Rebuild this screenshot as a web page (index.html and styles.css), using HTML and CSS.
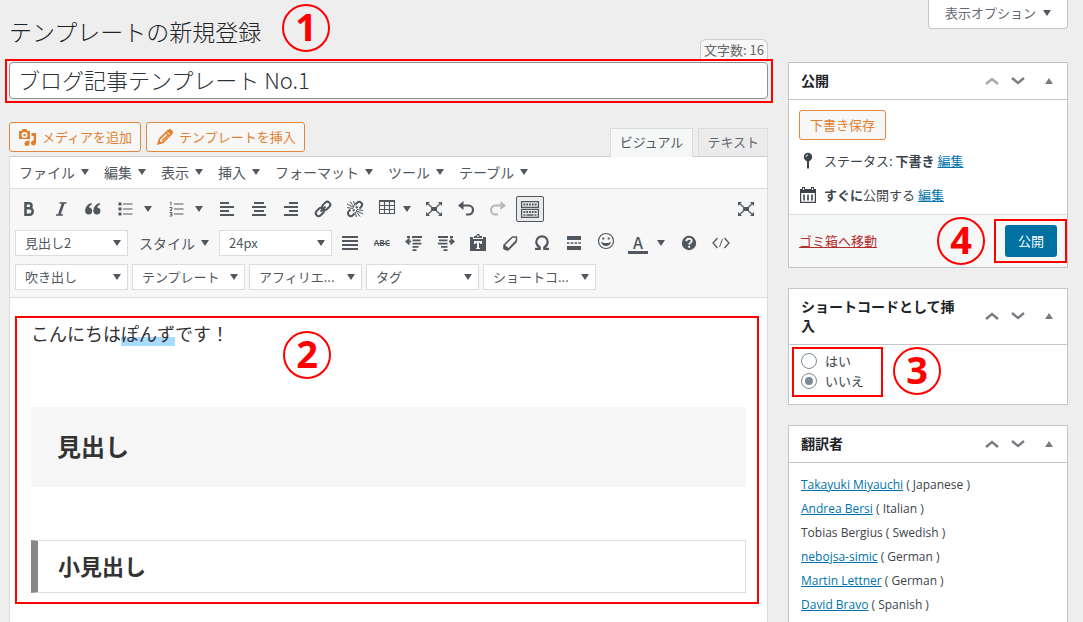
FILE: index.html
```html
<!DOCTYPE html>
<html lang="ja">
<head>
<meta charset="utf-8">
<title>テンプレートの新規登録</title>
<link rel="stylesheet" href="styles.css">
</head>
<body>
<div class="page">
  <main class="main">
    <header class="heading">
      <h1 class="heading-title">テンプレートの新規登録</h1>
      <span class="step step-1">1</span>
      <span class="counter">文字数: 16</span>
    </header>
    <div class="title-field">
      <input class="title-input" type="text" aria-label="タイトル" value="ブログ記事テンプレート No.1">
      <span class="frame frame-title"></span>
    </div>
    <div class="editor-tools">
      <div class="media-buttons">
        <button class="btn" type="button"><svg class="icon" viewBox="0 0 20 20"><path fill="currentColor" fill-rule="evenodd" d="M1 4h2.500l1-2h4l1 2H12v8H1zM6.500 5a3 3 0 1 0 0 6 3 3 0 0 0 0-6zM6.500 6.800a1.200 1.200 0 1 1 0 2.400 1.200 1.200 0 0 1 0-2.400zM13.500 6H18v10a2.500 2.500 0 1 1-2.300-2.500V9h-2.200zM11.500 13v3.500a2.500 2.500 0 1 1-2.500-2.500z"/></svg>メディアを追加</button>
        <button class="btn" type="button"><svg class="icon" viewBox="0 0 20 20"><path fill="none" stroke="currentColor" stroke-width="1.500" d="M3 17l1.500-5L13 3.500l3.500 3.500L8 15.500zM11 5.500L14.500 9M7 14l6.500-6.500M5 12l7-7"/><path fill="currentColor" d="M12 4l3-2.500L18.500 5 16 8zM3 17l1-4 3 3z"/></svg>テンプレートを挿入</button>
      </div>
      <div class="tabs">
        <button class="tab tab-active" type="button">ビジュアル</button>
        <button class="tab" type="button">テキスト</button>
      </div>
    </div>
    <section class="editor">
      <nav class="menubar">
        <button class="menu" type="button">ファイル<i class="caret"></i></button>
        <button class="menu" type="button">編集<i class="caret"></i></button>
        <button class="menu" type="button">表示<i class="caret"></i></button>
        <button class="menu" type="button">挿入<i class="caret"></i></button>
        <button class="menu" type="button">フォーマット<i class="caret"></i></button>
        <button class="menu" type="button">ツール<i class="caret"></i></button>
        <button class="menu" type="button">テーブル<i class="caret"></i></button>
      </nav>
      <div class="toolbar">
        <div class="tool-row">
          <button class="tool" type="button" aria-label="太字"><svg class="icon" viewBox="0 0 20 20"><path fill="none" stroke="currentColor" stroke-width="2.600" d="M6.500 4.300H10a2.500 2.500 0 0 1 0 5H6.500h4a3.100 3.100 0 0 1 0 6.400h-4zV16"/></svg></button>
          <button class="tool" type="button" aria-label="斜体"><svg class="icon" viewBox="0 0 20 20"><path fill="none" stroke="currentColor" stroke-width="1.600" d="M8.500 4h7M5 16h7"/><path stroke="currentColor" stroke-width="2.600" d="M12.300 4L8.200 16"/></svg></button>
          <button class="tool" type="button" aria-label="引用"><svg class="icon" viewBox="0 0 20 20"><path fill="currentColor" d="M8.500 4C4.500 5 2.200 8 2.200 12a3.500 3.500 0 1 0 3.900-3.500C6.300 7 7.300 6 9 5.200zM16.700 4c-4 1-6.300 4-6.300 8a3.500 3.500 0 1 0 3.900-3.500c.2-1.500 1.200-2.500 2.900-3.300z"/></svg></button>
          <button class="tool split" type="button" aria-label="番号なしリスト"><svg class="icon" viewBox="0 0 20 20"><path stroke="currentColor" stroke-width="1.200" d="M8 5h9.500M8 10h9.500M8 15h9.500"/><path fill="currentColor" d="M3.500 3.500h3v3h-3zM3.500 8.500h3v3h-3zM3.500 13.500h3v3h-3z"/></svg><i class="caret"></i></button>
          <button class="tool split" type="button" aria-label="番号付きリスト"><svg class="icon" viewBox="0 0 20 20"><path stroke="currentColor" stroke-width="1.200" d="M8 5h9.500M8 10h9.500M8 15h9.500"/><path fill="none" stroke="currentColor" stroke-width=".9" d="M4 3.500l1-.5v3.500M3.500 8.500H6V10L3.800 11.500H6M3.500 13.500H6v3.500H3.500M4 15.200h2"/></svg><i class="caret"></i></button>
          <button class="tool" type="button" aria-label="左揃え"><svg class="icon" viewBox="0 0 20 20"><path stroke="currentColor" stroke-width="1.800" d="M3 4h9M3 8h14M3 12h9M3 16h14"/></svg></button>
          <button class="tool" type="button" aria-label="中央揃え"><svg class="icon" viewBox="0 0 20 20"><path stroke="currentColor" stroke-width="1.800" d="M5 4h10M3 8h14M5 12h10M3 16h14"/></svg></button>
          <button class="tool" type="button" aria-label="右揃え"><svg class="icon" viewBox="0 0 20 20"><path stroke="currentColor" stroke-width="1.800" d="M8 4h9M3 8h14M8 12h9M3 16h14"/></svg></button>
          <button class="tool" type="button" aria-label="リンク"><svg class="icon" viewBox="0 0 20 20"><g fill="none" stroke="currentColor" stroke-width="2"><rect x="-4.500" y="-2.900" width="9" height="5.800" rx="2.900" transform="translate(6.800 13) rotate(-45)"/><rect x="-4.500" y="-2.900" width="9" height="5.800" rx="2.900" transform="translate(13.200 6.800) rotate(-45)"/><path d="M7.500 12.500l5-5"/></g></svg></button>
          <button class="tool" type="button" aria-label="リンク解除"><svg class="icon" viewBox="0 0 20 20"><path fill="none" stroke="currentColor" stroke-width="2" d="M10.500 5.500l1.700-1.700a2.700 2.700 0 0 1 4 4L14.500 9.500M9.500 14.500l-1.700 1.700a2.700 2.700 0 0 1-4-4L5.500 10.500M8 12l1.500-1.500M11 9l1.500-1.500"/><path stroke="currentColor" stroke-width="1" d="M2 5l7 3.500M5 2.500L9 8M8.500 2L10 7M2 8.500l6 1M18 15l-7-3.500M15 17.500L11 12M11.500 18L10 13M18 11.500l-6-1"/></svg></button>
          <button class="tool split split-tight" type="button" aria-label="表"><svg class="icon" viewBox="0 0 20 20"><path fill="none" stroke="currentColor" stroke-width="1.100" d="M2.500 1.500h15v13h-15zM2.500 6.500h15M2.500 10.500h15M7.500 1.500v13M12.500 1.500v13"/><path stroke="currentColor" stroke-width="2" d="M2 2h16"/></svg><i class="caret"></i></button>
          <button class="tool" type="button" aria-label="全画面"><svg class="icon" viewBox="0 0 20 20"><path fill="currentColor" d="M7 8h6v4H7zM2 3h4L2 7zM18 3v4l-4-4zM2 17v-4l4 4zM18 17h-4l4-4z"/><path stroke="currentColor" stroke-width="1.300" d="M3 4l4.500 4M17 4l-4.500 4M3 16l4.500-4M17 16l-4.500-4"/></svg></button>
          <button class="tool" type="button" aria-label="取り消し"><svg class="icon" viewBox="0 0 20 20"><path fill="currentColor" d="M2 6.500L7.500 2v9z"/><path fill="none" stroke="currentColor" stroke-width="2.200" d="M6 6.500h6.500a4.500 4.500 0 0 1 0 9H10"/></svg></button>
          <button class="tool tool-disabled" type="button" aria-label="やり直し"><svg class="icon" viewBox="0 0 20 20"><path fill="currentColor" d="M18 6.500L12.500 2v9z"/><path fill="none" stroke="currentColor" stroke-width="2" d="M14 6.500H7.500a4.500 4.500 0 0 0 0 9H10"/></svg></button>
          <button class="tool tool-pressed" type="button" aria-label="ツールバー切り替え"><svg class="icon" viewBox="0 0 20 20"><path fill="none" stroke="currentColor" stroke-width="1.300" d="M1.600 2.600h16.800v5.800H1.600zM1.600 10.400h16.800v8H1.600z"/><path stroke="currentColor" stroke-width="2" stroke-dasharray="1.800 1" d="M3.500 5.500h13.500M3.500 13h13.500"/><path stroke="currentColor" stroke-width="1.600" d="M3.500 16h2M6.500 16h7M14.500 16h2"/></svg></button>
          <button class="tool tool-end" type="button" aria-label="集中執筆モード"><svg class="icon" viewBox="0 0 20 20"><path fill="currentColor" d="M7 8h6v4H7zM2 3h4L2 7zM18 3v4l-4-4zM2 17v-4l4 4zM18 17h-4l4-4z"/><path stroke="currentColor" stroke-width="1.300" d="M3 4l4.500 4M17 4l-4.500 4M3 16l4.500-4M17 16l-4.500-4"/></svg></button>
        </div>
        <div class="tool-row">
          <span class="listbox"><select aria-label="段落"><option>見出し2</option></select><i class="caret"></i></span>
          <button class="menu menu-style" type="button">スタイル<i class="caret"></i></button>
          <span class="listbox"><select aria-label="フォントサイズ"><option>24px</option></select><i class="caret"></i></span>
          <button class="tool" type="button" aria-label="両端揃え"><svg class="icon" viewBox="0 0 20 20"><path stroke="currentColor" stroke-width="1.800" d="M2 4h16M2 8h16M2 12h16M2 16h16"/></svg></button>
          <button class="tool tool-abc" type="button" aria-label="打ち消し">ABC</button>
          <button class="tool" type="button" aria-label="インデントを減らす"><svg class="icon" viewBox="0 0 20 20"><path fill="none" stroke="currentColor" stroke-width="1.800" d="M3 4h3M8 4h10M8.500 7.300h8M8.500 10.600h9M8.500 13.900h6M8.500 17.200h4M3.500 8.500H7"/><path fill="currentColor" d="M1 8.500l4.500-4v8z"/></svg></button>
          <button class="tool" type="button" aria-label="インデントを増やす"><svg class="icon" viewBox="0 0 20 20"><path fill="none" stroke="currentColor" stroke-width="1.800" d="M2 4h10M14 4h3M3 7.300h8.500M2 10.600h9.500M5 13.900h6.500M7.500 17.200h4M13 8.500h3"/><path fill="currentColor" d="M19 8.500l-4.500-4v8z"/></svg></button>
          <button class="tool" type="button" aria-label="テキストとして貼り付け"><svg class="icon" viewBox="0 0 20 20"><path fill="currentColor" fill-rule="evenodd" d="M2 4h3v2h10V4h3v14H2zM6 8v3h1.500l.5-1.300h1v5l-1 .3v1h4v-1l-1-.3v-5h1l.5 1.300H14V8z"/><path fill="currentColor" fill-rule="evenodd" d="M6 5V3h2l1-2h2l1 2h2v2zM9.200 2.500h1.600V4H9.200z"/></svg></button>
          <button class="tool" type="button" aria-label="書式設定をクリア"><svg class="icon" viewBox="0 0 20 20"><path fill="none" stroke="currentColor" stroke-width="1.500" stroke-linejoin="round" d="M4 12l8.500-8h4v3.500L8.500 16zM4 12v3.500l3.500 1.500"/><path fill="currentColor" d="M4 12l4.500 4L7.500 17.800 3.500 16zM8.500 16L17 7.500V9L8 18z"/></svg></button>
          <button class="tool" type="button" aria-label="特殊文字"><svg class="icon" viewBox="0 0 20 20"><path fill="none" stroke="currentColor" stroke-width="2.200" d="M3 15.900h4.700v-1.600C5.500 13 4.300 11.300 4.300 9a5.700 5.700 0 0 1 11.400 0c0 2.300-1.200 4-3.400 5.300v1.600H17"/></svg></button>
          <button class="tool" type="button" aria-label="続きを読む"><svg class="icon" viewBox="0 0 20 20"><path fill="currentColor" d="M3 3h14v4H3zM3 13h14v4H3z"/><path stroke="currentColor" stroke-width="1.700" stroke-dasharray="2.500 1.300" d="M3 10h14"/></svg></button>
          <button class="tool" type="button" aria-label="絵文字"><svg class="icon icon-raised" viewBox="0 0 20 20"><circle cx="10" cy="10" r="7.500" fill="none" stroke="currentColor" stroke-width="1.200"/><path fill="currentColor" d="M6.300 6.500h2v2h-2zM11.700 6.500h2v2h-2zM5 10.500c1.500 2 8.500 2 10 0-.5 6-9.500 6-10 0z"/></svg></button>
          <button class="tool split tool-color" type="button" aria-label="テキスト色"><span class="color-letter">A</span><i class="caret"></i></button>
          <button class="tool" type="button" aria-label="キーボードショートカット"><svg class="icon" viewBox="0 0 20 20"><circle cx="10" cy="10" r="7.200" fill="currentColor"/><path fill="none" stroke="#f7f7f7" stroke-width="1.900" d="M7.300 8.200C7.300 5 12.700 5 12.700 8c0 1.800-2.500 1.800-2.500 3.600M10.200 12.800v2"/></svg></button>
          <button class="tool" type="button" aria-label="ソースコード"><svg class="icon" viewBox="0 0 20 20"><path fill="none" stroke="currentColor" stroke-width="1.300" d="M6.500 5L2 10l4.500 5M13.500 5l4.500 5-4.500 5"/><path stroke="currentColor" stroke-width="1" d="M11.500 6l-3 8"/></svg></button>
        </div>
        <div class="tool-row">
          <span class="listbox"><select aria-label="吹き出し"><option>吹き出し</option></select><i class="caret"></i></span>
          <span class="listbox"><select aria-label="テンプレート"><option>テンプレート</option></select><i class="caret"></i></span>
          <span class="listbox"><select aria-label="アフィリエイト"><option>アフィリエ...</option></select><i class="caret"></i></span>
          <span class="listbox"><select aria-label="タグ"><option>タグ</option></select><i class="caret"></i></span>
          <span class="listbox"><select aria-label="ショートコード"><option>ショートコ...</option></select><i class="caret"></i></span>
        </div>
      </div>
      <article class="content">
        <p class="content-text">こんにちは<mark class="marker">ぽんず</mark>です！</p>
        <h2 class="content-h2">見出し</h2>
        <h3 class="content-h3">小見出し</h3>
        <span class="frame frame-content"></span>
        <span class="step step-2">2</span>
      </article>
    </section>
  </main>
  <aside class="side">
    <button class="screen-options" type="button">表示オプション<i class="caret"></i></button>
    <section class="panel">
      <header class="panel-head"><h2 class="panel-title">公開</h2>
        <div class="panel-controls"><button class="ctl ctl-disabled" type="button" aria-label="上へ移動"><svg viewBox="0 0 14 8"><path d="M1 7l6-5 6 5"/></svg></button><button class="ctl" type="button" aria-label="下へ移動"><svg viewBox="0 0 14 8"><path d="M1 1l6 5 6-5"/></svg></button><button class="ctl ctl-toggle" type="button" aria-label="パネルを閉じる"><i class="caret-up"></i></button></div>
      </header>
      <div class="publish-body">
        <button class="btn" type="button">下書き保存</button>
        <p class="publish-row"><svg class="icon" viewBox="0 0 20 20"><circle cx="10" cy="6" r="4.200" fill="currentColor"/><path fill="currentColor" d="M9 9h2v8l-1 1-1-1z"/><path fill="none" stroke="#fff" d="M8 6c0-1.500 1-2 2-2"/></svg><span>ステータス: <b>下書き</b> <a href="#">編集</a></span></p>
        <p class="publish-row"><svg class="icon" viewBox="0 0 20 20"><path fill="currentColor" fill-rule="evenodd" d="M2 4h2V2h3v2h6V2h3v2h2v14H2zM3.200 8v8.800h13.600V8zM5 3v2h1V3zM14 3v2h1V3z"/><path stroke="currentColor" stroke-width="1.600" d="M6 9.500v6M10 9.500v6M14 9.500v6"/></svg><span><b>すぐに</b>公開する <a href="#">編集</a></span></p>
      </div>
      <footer class="publish-foot">
        <a class="trash" href="#">ゴミ箱へ移動</a>
        <span class="step step-4">4</span>
        <span class="publish-action"><button class="btn-primary" type="button">公開</button><span class="frame frame-publish"></span></span>
      </footer>
    </section>
    <section class="panel">
      <header class="panel-head"><h2 class="panel-title">ショートコードとして挿入</h2>
        <div class="panel-controls"><button class="ctl" type="button" aria-label="上へ移動"><svg viewBox="0 0 14 8"><path d="M1 7l6-5 6 5"/></svg></button><button class="ctl" type="button" aria-label="下へ移動"><svg viewBox="0 0 14 8"><path d="M1 1l6 5 6-5"/></svg></button><button class="ctl ctl-toggle" type="button" aria-label="パネルを閉じる"><i class="caret-up"></i></button></div>
      </header>
      <div class="choices">
        <label class="choice"><input type="radio" name="shortcode">はい</label>
        <label class="choice"><input type="radio" name="shortcode" checked>いいえ</label>
        <span class="frame frame-choices"></span>
        <span class="step step-3">3</span>
      </div>
    </section>
    <section class="panel panel-last">
      <header class="panel-head"><h2 class="panel-title">翻訳者</h2>
        <div class="panel-controls"><button class="ctl" type="button" aria-label="上へ移動"><svg viewBox="0 0 14 8"><path d="M1 7l6-5 6 5"/></svg></button><button class="ctl" type="button" aria-label="下へ移動"><svg viewBox="0 0 14 8"><path d="M1 1l6 5 6-5"/></svg></button><button class="ctl ctl-toggle" type="button" aria-label="パネルを閉じる"><i class="caret-up"></i></button></div>
      </header>
      <ul class="translators">
        <li><a href="#">Takayuki Miyauchi</a> ( Japanese )</li>
        <li><a href="#">Andrea Bersi</a> ( Italian )</li>
        <li>Tobias Bergius ( Swedish )</li>
        <li><a href="#">nebojsa-simic</a> ( German )</li>
        <li><a href="#">Martin Lettner</a> ( German )</li>
        <li><a href="#">David Bravo</a> ( Spanish )</li>
      </ul>
    </section>
  </aside>
</div>
</body>
</html>
```
FILE: styles.css
```css
* { box-sizing: border-box; }
body {
  margin: 0;
  background: #eee;
  color: #3c434a;
  font: 13px/20px "Noto Sans CJK JP", "Noto Sans", sans-serif;
}
button, input, select { font: inherit; color: inherit; margin: 0; }
button { cursor: pointer; white-space: nowrap; }
h1, h2, h3, p, ul { margin: 0; padding: 0; }
a { color: #0073aa; }
.page {
  display: grid;
  grid-template-columns: minmax(0, 1fr) 280px;
  gap: 20px;
  min-height: 100vh;
  padding: 0 15px 0 9px;
}
.main, .side { display: flex; flex-direction: column; }

.icon { width: 20px; height: 20px; flex: none; display: block; }
.caret {
  flex: none;
  border: 4px solid transparent;
  border-top: 6px solid #50575e;
  border-bottom: 0;
}
.caret-up {
  border: 4px solid transparent;
  border-bottom: 6px solid #787c82;
  border-top: 0;
}

/* Numbered callouts */
.frame { position: absolute; border: 2px solid #f00; pointer-events: none; }
.step {
  position: absolute;
  width: 48px;
  height: 48px;
  border: 2px solid #f00;
  border-radius: 50%;
  color: #f00;
  font: bold 38px/41px "Noto Sans", sans-serif;
  text-align: center;
}
.step-1 { left: 273px; top: 4px; }
.step-2 { left: 273px; top: 33px; }
.step-3 { left: 104px; top: 2px; }
.step-4 { right: 82px; top: 2px; }

/* Heading and title */
.heading {
  position: relative;
  display: flex;
  justify-content: space-between;
  align-items: flex-end;
  height: 62px;
}
.heading-title {
  padding-bottom: 15px;
  font-size: 23px;
  line-height: 32px;
  font-weight: 300;
  color: #1d2327;
}
.counter {
  height: 23px;
  padding: 0 3px;
  border: 1px solid #ccc;
  border-bottom: 0;
  border-radius: 6px 6px 0 0;
  background: #f7f7f7;
  color: #666;
}
.title-field { position: relative; }
.title-input {
  display: block;
  width: 100%;
  height: 37px;
  padding: 0 8px 4px;
  border: 1px solid #8c8f94;
  border-radius: 4px;
  background: #fff;
  color: #2c3338;
  font-size: 22px;
  font-weight: 300;
}
.frame-title { inset: -3px -5px -4px -4px; }

/* Buttons above the editor */
.editor-tools {
  display: flex;
  justify-content: space-between;
  align-items: flex-end;
  padding-top: 23px;
}
.media-buttons { display: flex; gap: 5px; padding-bottom: 4px; }
.btn {
  display: inline-flex;
  align-items: center;
  gap: 4px;
  height: 30px;
  padding: 0 8px;
  border: 1px solid #e1873f;
  border-radius: 3px;
  background: #f7f7f7;
  color: #e08030;
}
.tabs { display: flex; gap: 5px; }
.tab {
  height: 28px;
  padding: 0 8px 2px;
  border: 1px solid #dcdcde;
  border-bottom: 0;
  background: #ebebeb;
  color: #646970;
}
.tab-active {
  z-index: 1;
  height: 29px;
  margin-bottom: -1px;
  padding: 0 9px 3px;
  background: #f6f7f7;
  color: #50575e;
}

/* Editor */
.editor {
  flex: 1;
  display: flex;
  flex-direction: column;
  border: 1px solid #dcdcde;
  border-top-color: #ccc;
  border-bottom: 0;
  background: #fff;
}
.menubar {
  display: flex;
  align-items: center;
  height: 32px;
  padding: 0 1px 2px;
  border-bottom: 1px solid #dcdcde;
}
.menu {
  display: flex;
  align-items: center;
  gap: 6px;
  padding: 0 7px 0 8px;
  border: 0;
  background: none;
  color: #50575e;
  font-size: 14px;
}
.toolbar {
  display: flex;
  flex-direction: column;
  padding: 3px 5px;
  border-bottom: 1px solid #dcdcde;
  background: #f7f7f7;
  color: #50575e;
}
.tool-row { display: flex; align-items: center; gap: 4px; height: 34px; }
.tool {
  display: flex;
  align-items: center;
  justify-content: center;
  width: 28px;
  height: 28px;
  flex: none;
  padding: 0;
  border: 0;
  border-radius: 2px;
  background: none;
  color: #50575e;
}
.split { width: 47px; justify-content: flex-start; gap: 9px; padding-left: 4px; }
.split-tight { width: 43px; gap: 6px; }
.tool-disabled { color: #b4b9be; }
.tool-pressed { height: 26px; border: 1px solid #50575e; background: #ebebeb; }
.tool-end { margin-left: auto; margin-right: 2px; }
.tool-abc { font-size: 8px; font-weight: bold; text-decoration: line-through; }
.icon-raised { margin-bottom: 4px; }
.color-letter {
  width: 20px;
  border-bottom: 3px solid #50575e;
  font-size: 16px;
  line-height: 18px;
  font-weight: 500;
  text-align: center;
}
.menu-style { width: 83px; padding: 0 7px; }
.listbox { position: relative; display: flex; width: 113px; flex: none; }
.listbox select {
  appearance: none;
  width: 100%;
  height: 26px;
  padding: 0 20px 1px 9px;
  border: 1px solid #dcdcde;
  border-radius: 0;
  background: #fff;
}
.listbox .caret { position: absolute; right: 7px; top: 10px; pointer-events: none; }

.content { position: relative; padding: 18px 21px; color: #333; }
.content-text { font-size: 18px; line-height: 34px; }
.marker { color: inherit; background: linear-gradient(transparent 65%, #a8dcff 65%); line-height: 1; }
.content-h2 {
  margin-top: 57px;
  padding: 19px 26px 21px;
  border-radius: 2px;
  background: #f6f6f6;
  font-size: 24px;
  line-height: 40px;
}
.content-h3 {
  margin-top: 53px;
  padding: 0 20px 2px;
  border: 1px solid #ddd;
  border-left: 7px solid #888;
  font-size: 22px;
  line-height: 49px;
}
.frame-content { inset: 18px 8px 7px 5px; }

/* Sidebar */
.screen-options {
  align-self: flex-end;
  display: flex;
  align-items: center;
  gap: 7px;
  height: 29px;
  margin-bottom: 33px;
  padding: 0 16px 2px;
  border: 1px solid #c3c4c7;
  border-top: 0;
  border-radius: 0 0 4px 4px;
  background: #fff;
  color: #646970;
}
.panel { margin-bottom: 20px; border: 1px solid #c3c4c7; background: #fff; }
.panel-last { flex: 1; margin-bottom: 0; border-bottom: 0; }
.panel-head {
  display: flex;
  align-items: center;
  justify-content: space-between;
  gap: 28px;
  padding: 8px 12px 9px;
  border-bottom: 1px solid #c3c4c7;
}
.panel-title { color: #1d2327; font-size: 14px; line-height: 19px; }
.panel-controls { display: flex; flex: none; gap: 12px; }
.ctl { display: flex; align-items: center; padding: 0; border: 0; background: none; color: #787c82; }
.ctl svg { width: 14px; height: 8px; fill: none; stroke: currentColor; stroke-width: 2.4; }
.ctl-disabled { color: #a7aaad; }
.ctl-toggle { padding: 0 2px 0 8px; }
.publish-body { padding: 10px 10px 2px; }
.publish-body .btn { padding: 0 10px; }
.publish-row { display: flex; align-items: center; gap: 6px; height: 34px; }
.publish-row .icon { margin-left: -1px; }
.publish-body .btn + .publish-row { margin-top: 4px; }
.publish-foot {
  position: relative;
  display: flex;
  align-items: center;
  justify-content: space-between;
  padding: 10px;
  border-top: 1px solid #dcdcde;
  background: #f6f7f7;
}
.trash { color: #b32d2e; }
.publish-action { position: relative; }
.btn-primary {
  display: block;
  height: 32px;
  padding: 0 13px;
  border: 0;
  border-radius: 3px;
  background: #0071a1;
  color: #fff;
}
.frame-publish { inset: -6px -10px -6px -11px; }
.choices { position: relative; padding: 6px 12px 13px; }
.choice { display: flex; align-items: center; gap: 8px; height: 20px; }
.choice input {
  appearance: none;
  display: grid;
  place-items: center;
  width: 16px;
  height: 16px;
  border: 1px solid #7e8993;
  border-radius: 50%;
  background: #fff;
}
.choice input:checked::before {
  content: "";
  width: 8px;
  height: 8px;
  border-radius: 50%;
  background: #7e8993;
}
.frame-choices { left: 3px; top: 2px; width: 91px; height: 50px; }
.translators {
  padding: 10px 12px;
  list-style: none;
  font: 12px/24px "Open Sans", "Noto Sans", sans-serif;
}
```
